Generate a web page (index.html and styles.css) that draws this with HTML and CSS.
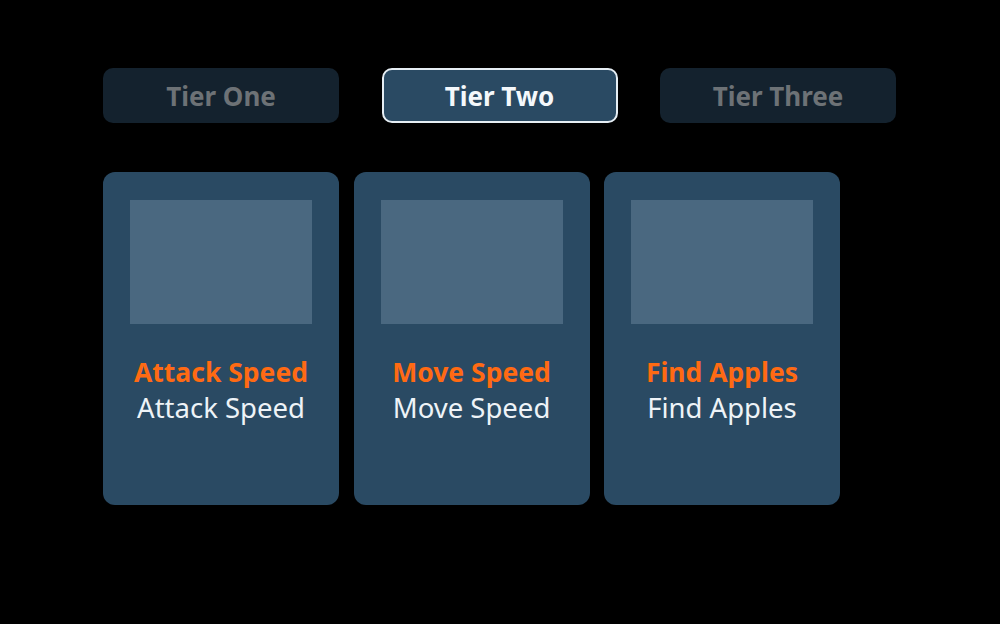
FILE: index.html
```html
<!DOCTYPE html>
<html>
<head>
<meta charset="utf-8">
<link rel="stylesheet" href="styles.css">
</head>
<body>
<div class="page">
  <div class="tabs">
    <div class="tab">Tier One</div>
    <div class="tab active">Tier Two</div>
    <div class="tab">Tier Three</div>
  </div>
  <div class="cards">
    <div class="card">
      <div class="thumb"></div>
      <div class="title">Attack Speed</div>
      <div class="desc">Attack Speed</div>
    </div>
    <div class="card">
      <div class="thumb"></div>
      <div class="title">Move Speed</div>
      <div class="desc">Move Speed</div>
    </div>
    <div class="card">
      <div class="thumb"></div>
      <div class="title">Find Apples</div>
      <div class="desc">Find Apples</div>
    </div>
  </div>
</div>
</body>
</html>
```

FILE: styles.css
```css
html, body {
  margin: 0;
  padding: 0;
  background: #000;
  width: 1000px;
  height: 624px;
  overflow: hidden;
  font-family: "Noto Sans", "Open Sans", sans-serif;
}
.page {
  padding: 68px 0 0 103px;
}
.tabs {
  display: flex;
  gap: 42.5px;
}
.tab {
  width: 236px;
  height: 55px;
  box-sizing: border-box;
  border-radius: 10px;
  background: #14222e;
  color: #6d7276;
  font-weight: 700;
  font-size: 26px;
  display: flex;
  align-items: center;
  justify-content: center;
}
.tab.active {
  background: #2a4a63;
  border: 2px solid #e6eef4;
  color: #f4f8fb;
}
.cards {
  display: flex;
  gap: 14.5px;
  margin-top: 49px;
}
.card {
  width: 236px;
  height: 333px;
  box-sizing: border-box;
  padding: 28px 27px 0 27px;
  background: #2a4a63;
  border-radius: 12px;
  text-align: center;
}
.thumb {
  height: 124px;
  background: #4a6880;
}
.title {
  margin-top: 30px;
  line-height: 36px;
  font-size: 26.5px;
  font-weight: 700;
  color: #ff6a13;
}
.desc {
  line-height: 36px;
  font-size: 27.5px;
  color: #eef3f7;
}
```
